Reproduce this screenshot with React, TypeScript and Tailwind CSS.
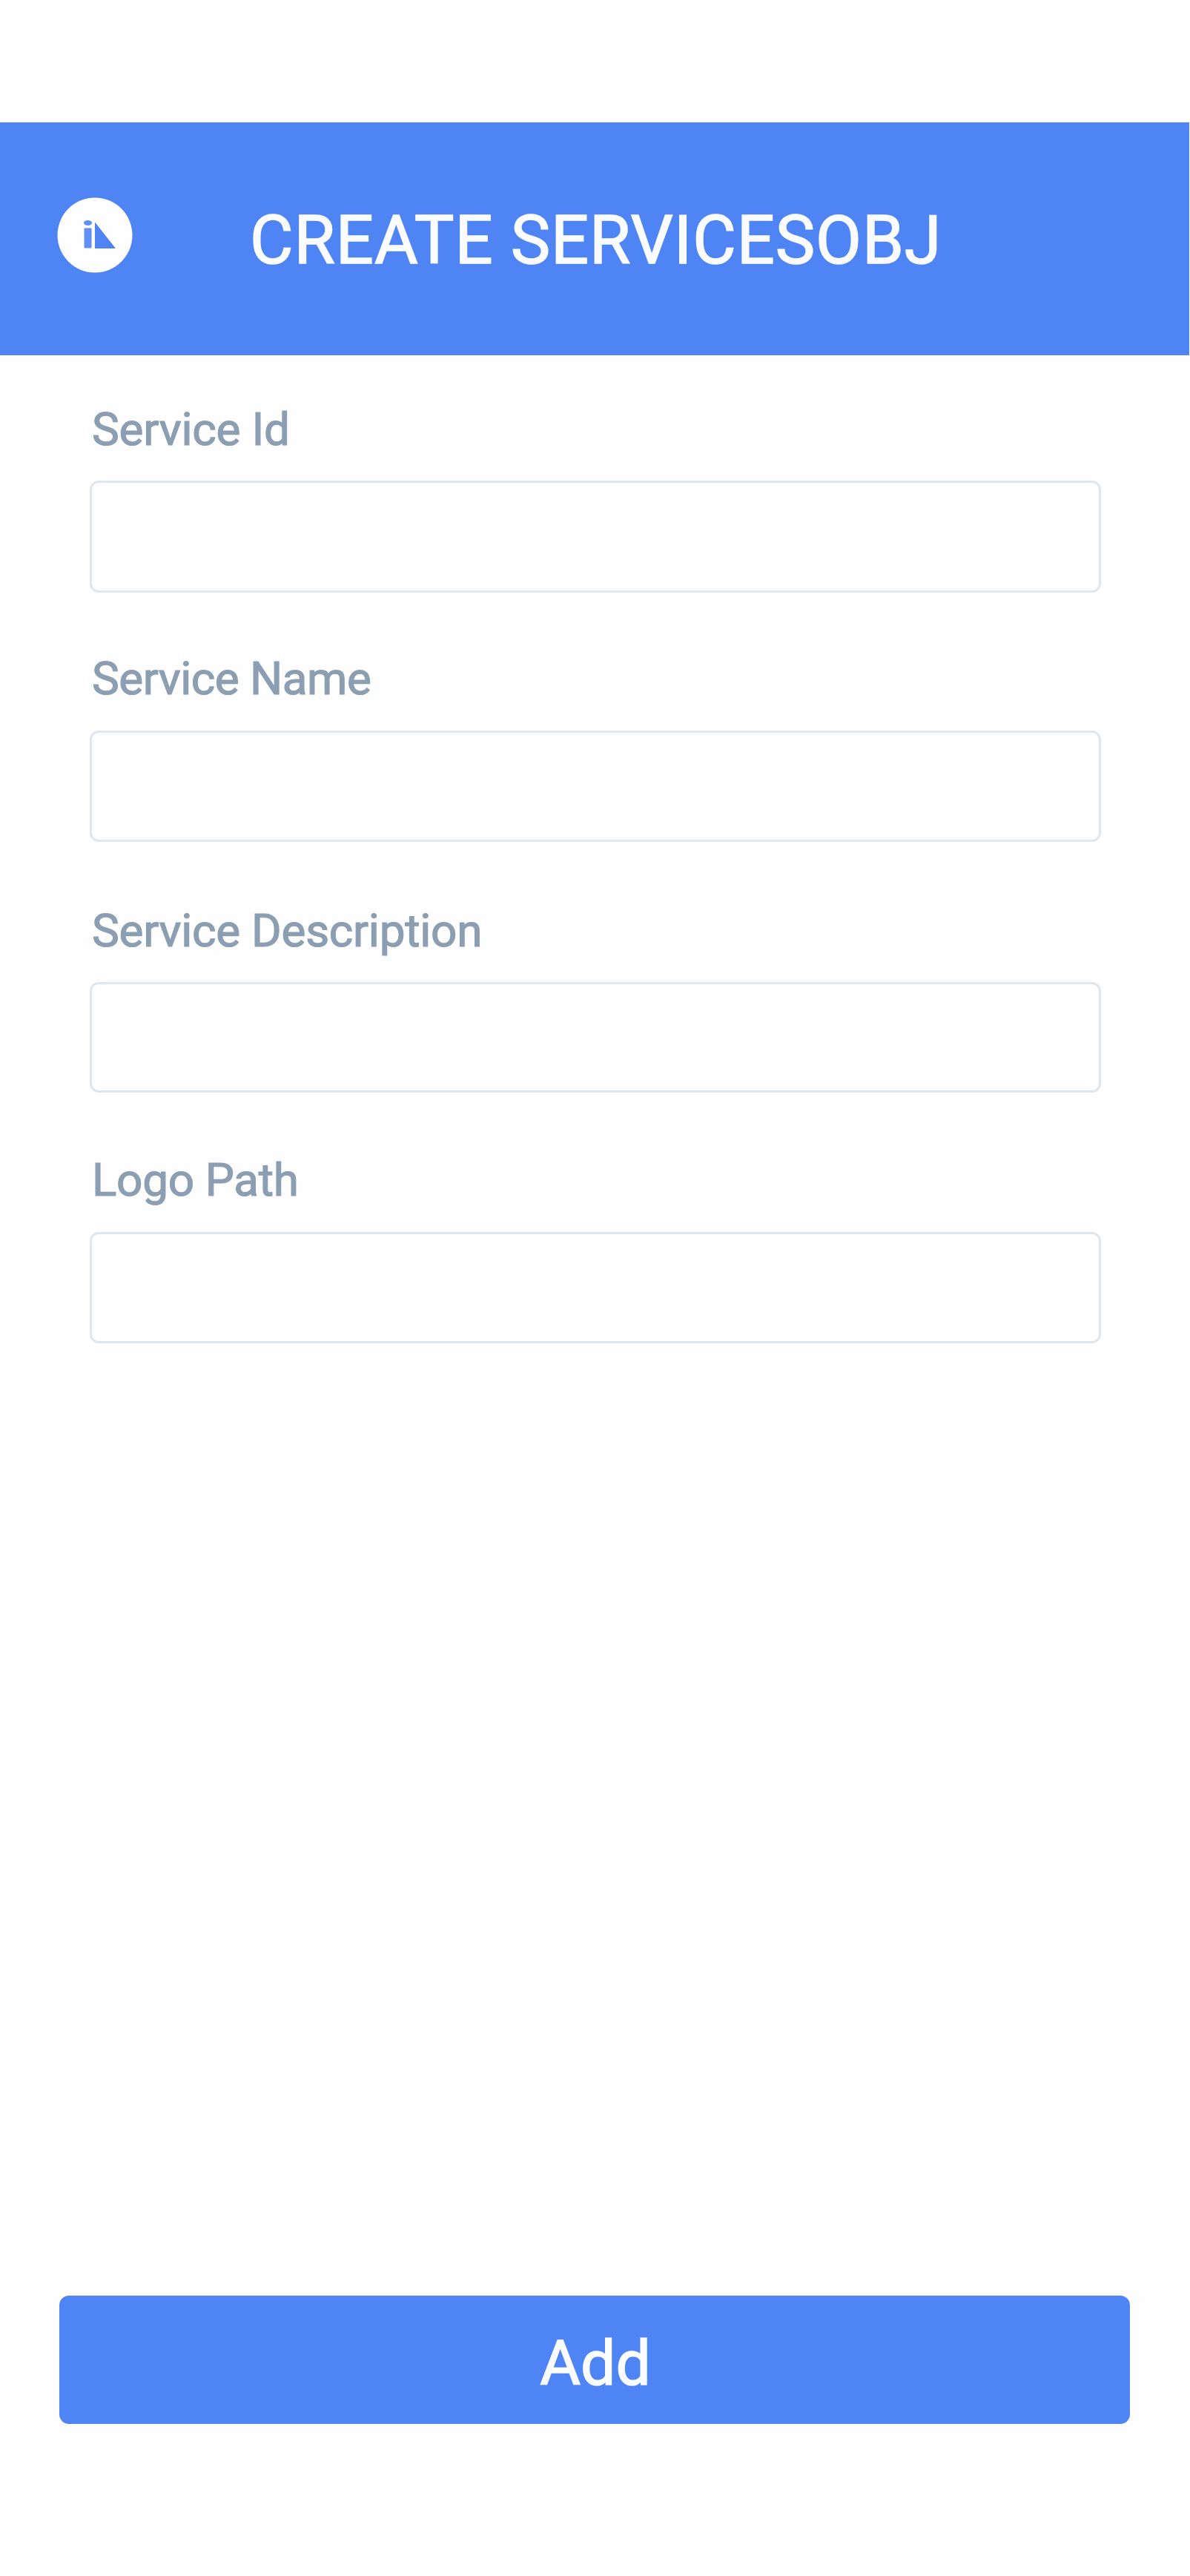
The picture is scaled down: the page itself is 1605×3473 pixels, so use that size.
interface Field {
  id: string;
  label: string;
  labelClass: string;
  inputClass: string;
}

const fields: Field[] = [
  { id: "service-id", label: "Service Id", labelClass: "mt-[69px] tracking-[-0.2px]", inputClass: "mt-[38px] h-[151px]" },
  { id: "service-name", label: "Service Name", labelClass: "mt-[85px] tracking-[-0.5px]", inputClass: "mt-[39px] h-[150px]" },
  { id: "service-description", label: "Service Description", labelClass: "mt-[89px] tracking-[-0.25px]", inputClass: "mt-[38px] h-[149px]" },
  { id: "logo-path", label: "Logo Path", labelClass: "mt-[87px] tracking-[-0.3px]", inputClass: "mt-[39px] h-[150px]" },
];

function Logo() {
  return (
    <svg viewBox="0 0 102 102" className="mt-[101px] ml-[77px] size-[102px] shrink-0" aria-hidden="true">
      <circle cx="51" cy="51" r="50.5" fill="#fefefe" />
      <g fill="#4f84f4">
        <ellipse cx="41.5" cy="34.5" rx="5.5" ry="3.4" opacity="0.9" />
        <rect x="36.5" y="41.5" width="10" height="27" rx="1" opacity="0.9" />
        <path d="M51 33.5 79 69H51z" />
      </g>
    </svg>
  );
}

export default function App() {
  return (
    <div className="flex h-[3473px] w-[1605px] flex-col bg-[#fefefe] pt-[165px] font-['Roboto',sans-serif]">
      <header className="flex h-[314px] w-[1604px] shrink-0 items-start bg-[#4f84f4]">
        <Logo />
        <h1 className="mt-[115px] ml-[158px] text-[90px] leading-[90px] font-normal tracking-[0.9px] whitespace-nowrap text-[#fafcff] [-webkit-text-stroke:1.5px_#fafcff]">
          CREATE SERVICESOBJ
        </h1>
      </header>
      <form className="flex grow flex-col pb-[205px]">
        {fields.map((f) => (
          <div key={f.id} className="flex flex-col pr-[120px] pl-[121px]">
            <label
              htmlFor={f.id}
              className={`ml-[3px] text-[62px] leading-[62px] whitespace-nowrap text-[#8b9eb2] [-webkit-text-stroke:1.2px_#8b9eb2] ${f.labelClass}`}
            >
              {f.label}
            </label>
            <input
              id={f.id}
              type="text"
              className={`w-full rounded-[12px] border-[3px] border-[#e0e6ed] bg-[#fefefe] px-8 text-[62px] outline-none ${f.inputClass}`}
            />
          </div>
        ))}
        <button
          type="button"
          className="mt-auto mr-[81px] ml-[80px] flex h-[173px] shrink-0 items-start justify-center rounded-[13px] bg-[#4f84f4] pt-[50px] pl-[2px] text-[84px] leading-[84px] text-[#fafcff] [-webkit-text-stroke:1.5px_#fafcff]"
        >
          Add
        </button>
      </form>
    </div>
  );
}
